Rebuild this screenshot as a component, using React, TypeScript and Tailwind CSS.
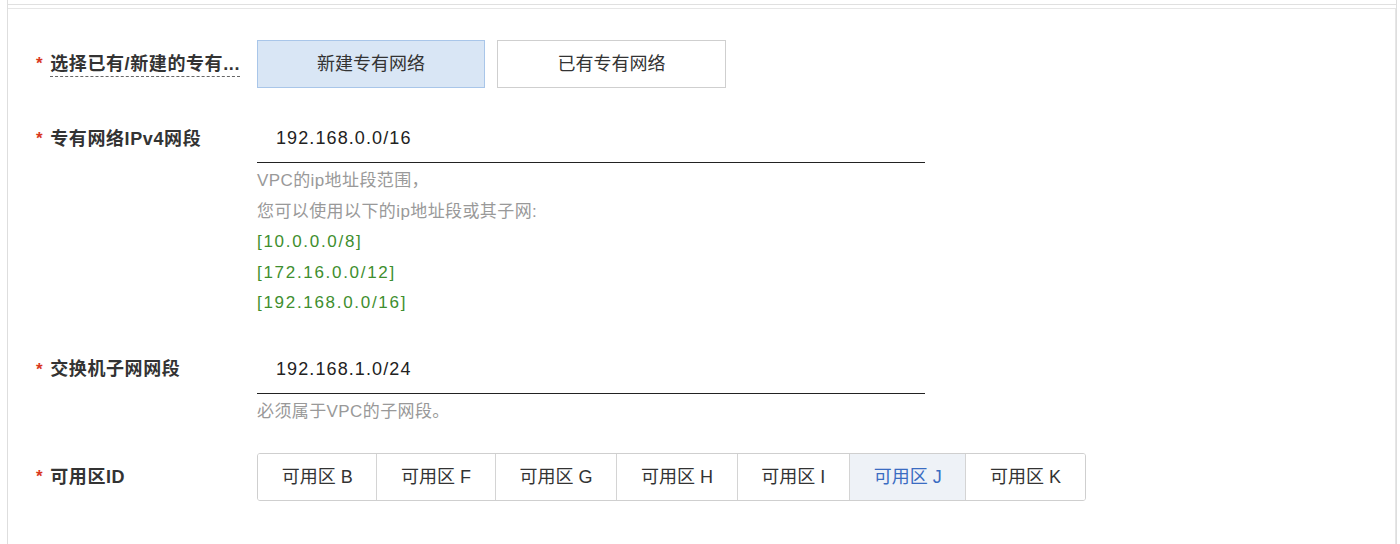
const font = "font-['Liberation_Sans','Noto_Sans_CJK_SC',sans-serif]";

const zones = ['B', 'F', 'G', 'H', 'I', 'J', 'K'];

function Label({ text, dashed }: { text: string; dashed?: boolean }) {
  return (
    <div className="w-[221px] shrink-0 flex items-center h-[48px] text-[18px] font-semibold text-[#333] tracking-[0.6px]">
      <span className="text-[#d9381e] mr-[7px] text-[17px]">*</span>
      {dashed ? (
        <span className="border-b border-dashed border-[#666] leading-[24px]">{text}</span>
      ) : (
        <span>{text}</span>
      )}
    </div>
  );
}

function UnderlineInput({ value }: { value: string }) {
  return (
    <div className="w-[668px] h-[48px] border-b border-[#222] flex items-center pl-[19px] text-[18px] text-[#222] tracking-[1.1px]">
      {value}
    </div>
  );
}

export default function App() {
  return (
    <div className={`h-[544px] bg-white pl-[7px] pr-[3px] overflow-hidden ${font}`}>
      <div className="h-full border-l border-r border-[#dedede] pt-[4px]">
        <div className="h-[4px] border-t border-[#e0e0e0]" />
        <div className="h-full border-t border-r border-[#e6e6e6] pt-[31px] pl-[28px]">
          {/* vpc choice */}
          <div className="flex">
            <Label text="选择已有/新建的专有..." dashed />
            <div className="flex gap-[12px]">
              <button className="w-[228px] h-[48px] bg-[#d9e6f5] border border-[#a9c6e9] text-[18px] text-[#333]">
                新建专有网络
              </button>
              <button className="w-[229px] h-[48px] bg-white border border-[#cfcfcf] text-[18px] text-[#333]">
                已有专有网络
              </button>
            </div>
          </div>

          {/* ipv4 */}
          <div className="flex mt-[27px]">
            <Label text="专有网络IPv4网段" />
            <div>
              <UnderlineInput value="192.168.0.0/16" />
              <div className="mt-[3px] text-[17px] leading-[30.5px] text-[#999] tracking-[0.4px]">
                <div>VPC的ip地址段范围，</div>
                <div>您可以使用以下的ip地址段或其子网:</div>
                <div className="text-[#3e8e2e] tracking-[1.7px]">[10.0.0.0/8]</div>
                <div className="text-[#3e8e2e] tracking-[1.7px]">[172.16.0.0/12]</div>
                <div className="text-[#3e8e2e] tracking-[1.7px]">[192.168.0.0/16]</div>
              </div>
            </div>
          </div>

          {/* vswitch */}
          <div className="flex mt-[27px]">
            <Label text="交换机子网网段" />
            <div>
              <UnderlineInput value="192.168.1.0/24" />
              <div className="mt-[3px] text-[17px] leading-[30.5px] text-[#999] tracking-[0.4px]">必须属于VPC的子网段。</div>
            </div>
          </div>

          {/* zone */}
          <div className="flex mt-[26px]">
            <Label text="可用区ID" />
            <div className="flex h-[48px] border border-[#cfcfcf] rounded-[3px] overflow-hidden">
              {zones.map((z, i) => (
                <button
                  key={z}
                  className={`px-[23.7px] text-[18px] ${i > 0 ? 'border-l border-[#d4d4d4]' : ''} ${
                    z === 'J' ? 'bg-[#eef2f7] text-[#3a6cc2]' : 'bg-white text-[#333]'
                  }`}
                >
                  可用区 {z}
                </button>
              ))}
            </div>
          </div>
        </div>
      </div>
    </div>
  );
}
